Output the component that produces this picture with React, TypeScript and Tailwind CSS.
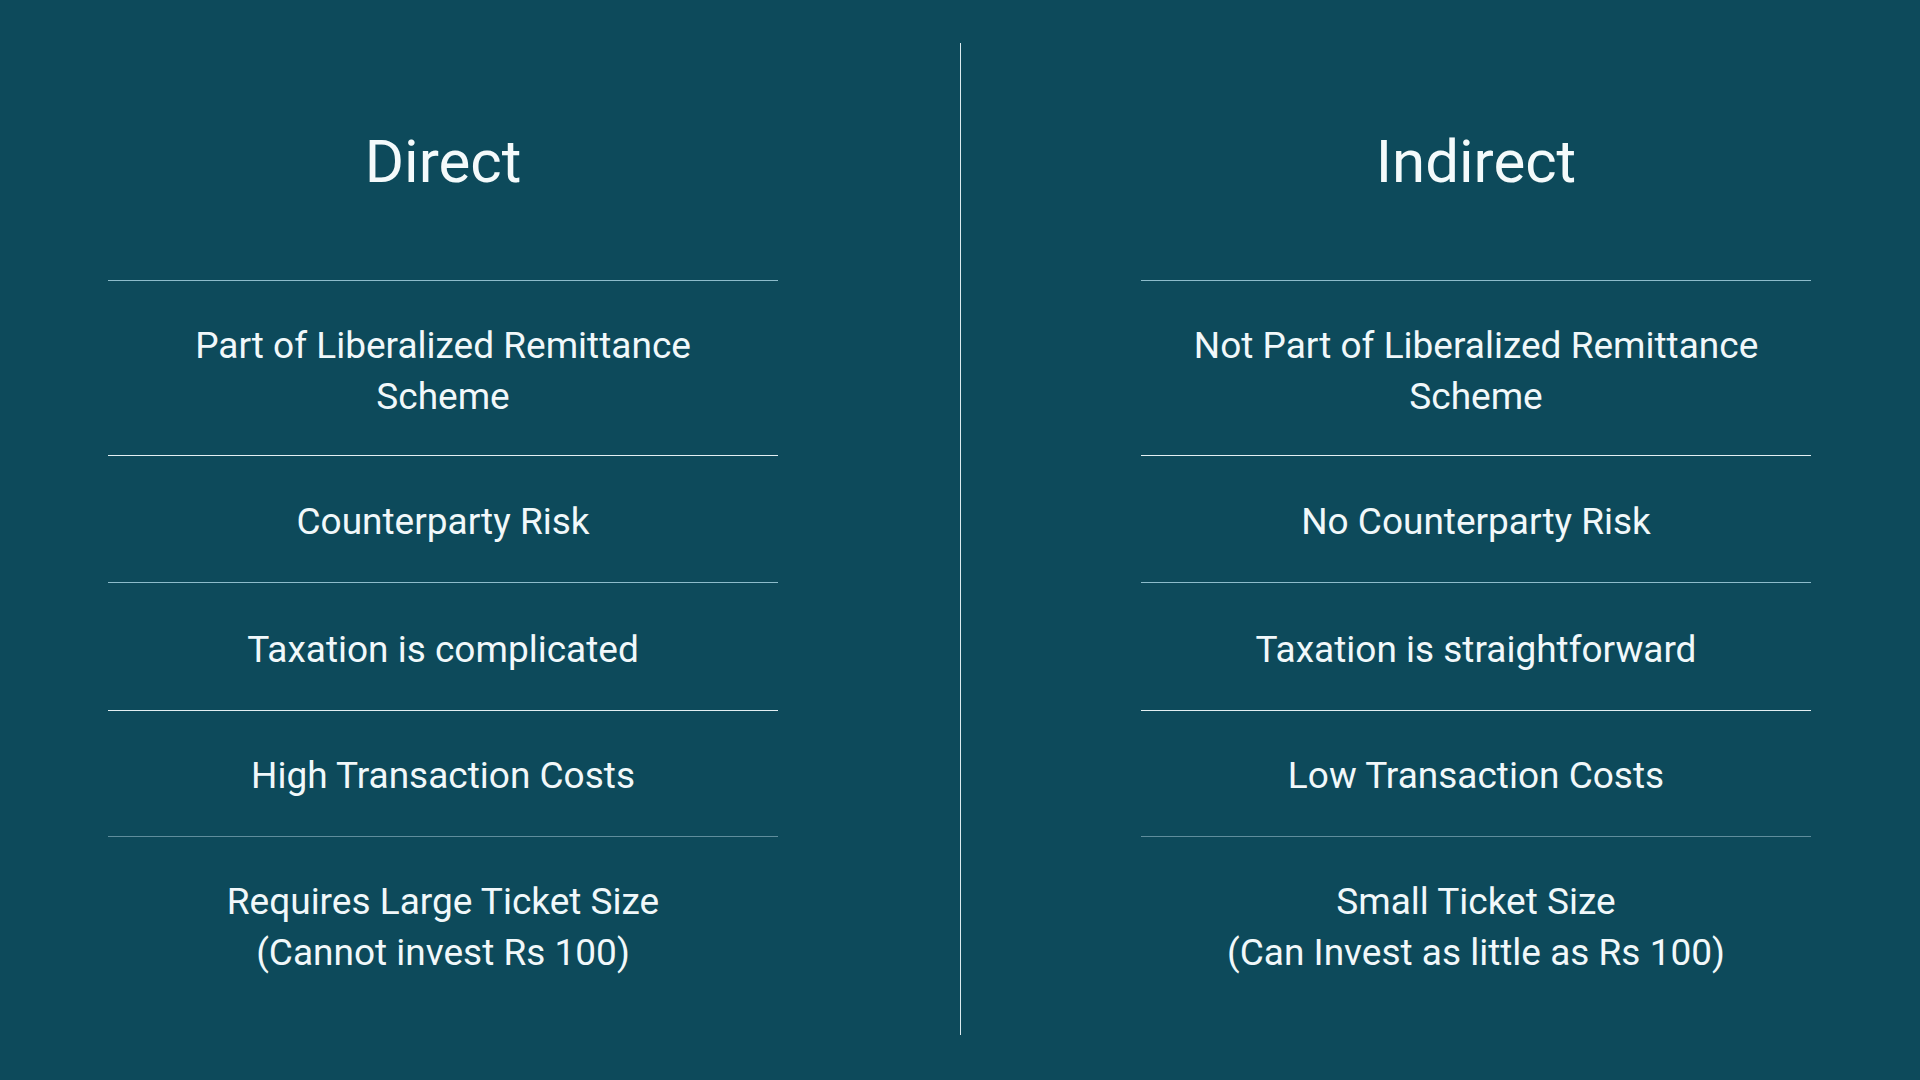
const direct = [
  { lines: ['Part of Liberalized Remittance', 'Scheme'], h: 'h-[175px] pt-[6px]' },
  { lines: ['Counterparty Risk'], h: 'h-[127px] pt-[4px]' },
  { lines: ['Taxation is complicated'], h: 'h-[128px] pt-[6px]' },
  { lines: ['High Transaction Costs'], h: 'h-[126px] pt-[4px]' },
  { lines: ['Requires Large Ticket Size', '(Cannot invest Rs 100)'], h: 'h-[180px]' },
];

const indirect = [
  { lines: ['Not Part of Liberalized Remittance', 'Scheme'], h: 'h-[175px] pt-[6px]' },
  { lines: ['No Counterparty Risk'], h: 'h-[127px] pt-[4px]' },
  { lines: ['Taxation is straightforward'], h: 'h-[128px] pt-[6px]' },
  { lines: ['Low Transaction Costs'], h: 'h-[126px] pt-[4px]' },
  { lines: ['Small Ticket Size', '(Can Invest as little as Rs 100)'], h: 'h-[180px]' },
];

// each separator has a slightly different tint in the slide
const borders = [
  'border-[#8dbccb]',
  'border-[#e3f0f3]',
  'border-[#8dbccb]',
  'border-[#e3f0f3]',
  'border-[#5f8d9c]',
];

function Column({ title, rows }: { title: string; rows: { lines: string[]; h: string }[] }) {
  return (
    <div className="w-[670px] flex flex-col">
      <div className="h-[237px] flex items-center justify-center">
        <h1 className="text-[60px] leading-none text-[#f4fafb] font-normal">{title}</h1>
      </div>
      {rows.map((row, i) => (
        <div
          key={i}
          className={`${row.h} border-t ${borders[i]} flex flex-col items-center justify-center text-center text-[37px] leading-[51px] text-[#f1f8fa]`}
        >
          {row.lines.map((l, j) => (
            <div key={j}>{l}</div>
          ))}
        </div>
      ))}
    </div>
  );
}

export default function App() {
  return (
    <main
      className="w-[1920px] h-[1080px] bg-[#0d4a5b] overflow-hidden"
      style={{ fontFamily: 'Roboto, "Liberation Sans", sans-serif' }}
    >
      <div className="flex pt-[43px] pl-[108px]">
        <Column title="Direct" rows={direct} />
        <div className="ml-[182px] mr-[180px] w-px h-[992px] bg-[#dcebef]" />
        <Column title="Indirect" rows={indirect} />
      </div>
    </main>
  );
}
